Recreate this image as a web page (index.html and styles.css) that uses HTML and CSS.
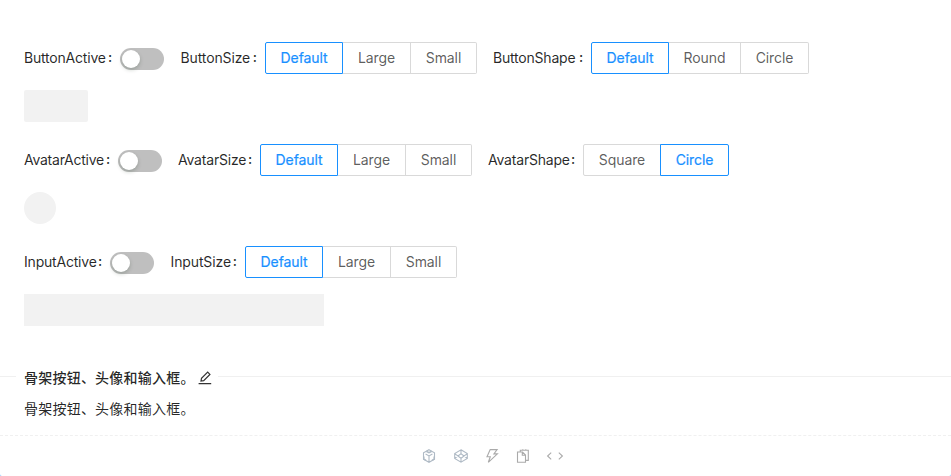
FILE: index.html
```html
<!DOCTYPE html>
<html lang="zh-CN">
<head>
<meta charset="utf-8">
<title>Skeleton</title>
<link rel="stylesheet" href="styles.css">
</head>
<body>
<section class="card">
  <div class="demo">
    <div class="form">
      <div class="item"><label class="label l-button-active">ButtonActive</label><button class="switch" aria-label="ButtonActive"></button></div>
      <div class="item"><label class="label wider l-button-size">ButtonSize</label><div class="group"><span class="radio w-default checked">Default</span><span class="radio w-large">Large</span><span class="radio w-small">Small</span></div></div>
      <div class="item"><label class="label l-button-shape">ButtonShape</label><div class="group"><span class="radio w-default checked">Default</span><span class="radio w-round">Round</span><span class="radio w-circle">Circle</span></div></div>
    </div>
    <div class="skeleton sk-button"></div>
    <div class="form">
      <div class="item"><label class="label tight l-avatar-active">AvatarActive</label><button class="switch" aria-label="AvatarActive"></button></div>
      <div class="item"><label class="label l-avatar-size">AvatarSize</label><div class="group"><span class="radio w-default checked">Default</span><span class="radio w-large">Large</span><span class="radio w-small">Small</span></div></div>
      <div class="item"><label class="label l-avatar-shape">AvatarShape</label><div class="group"><span class="radio w-square">Square</span><span class="radio w-circle checked">Circle</span></div></div>
    </div>
    <div class="skeleton sk-avatar"></div>
    <div class="form">
      <div class="item"><label class="label l-input-active">InputActive</label><button class="switch" aria-label="InputActive"></button></div>
      <div class="item"><label class="label wider l-input-size">InputSize</label><div class="group"><span class="radio w-default checked">Default</span><span class="radio w-large">Large</span><span class="radio w-small">Small</span></div></div>
    </div>
    <div class="skeleton sk-input"></div>
  </div>
  <div class="title">
    <span class="title-text">骨架按钮、头像和输入框。</span>
    <svg class="edit" viewBox="0 0 14 14"><path d="M.6 12.7h12.6M3 10l.5-2.6L9.7 1.2l2.200 2.200-6.200 6.200L3 10z"/></svg>
  </div>
  <p class="desc">骨架按钮、头像和输入框。</p>
  <div class="actions">
    <svg class="tool blue" viewBox="0 0 16 16"><path d="M8 1.700l5.500 3.100v6.400L8 14.300l-5.500-3.100V4.800zM4.600 6L8 7.900 11.400 6M8 7.900v6"/><path class="thick" d="M5.300 3.300L8 4.600l2.700-1.300M2.800 8.400v2.700l2.200 1.300M13.200 8.400v2.700L11 12.400"/></svg>
    <svg class="tool blue" viewBox="0 0 16 16"><path d="M8 1.800l6.300 3.800v4.800L8 14.200l-6.300-3.800V5.600zM8 1.800v4M8 10.200v4M1.700 5.600L8 10.200l6.300-4.600M1.700 10.400L8 5.800l6.300 4.600"/></svg>
    <svg class="tool" viewBox="0 0 16 16"><path d="M6.200 1.600h6.900L9.900 5.900h3.500L4.300 14.300l2-5.500H3z"/></svg>
    <svg class="tool" viewBox="0 0 16 16"><path d="M2.500 4h5l3 3v7.200h-8zM7.300 4v3.200h3.200M5.300 3.600V2.200h8v10.200h-2.200M7.800 1.200v1.500M10.800 1.200v1.500"/></svg>
    <svg class="tool wide" viewBox="0 0 18 16"><path d="M5.200 4.700L1.600 8l3.600 3.300M12.800 4.700L16.400 8l-3.600 3.300"/></svg>
  </div>
</section>
</body>
</html>
```

FILE: styles.css
```css
* { box-sizing: border-box; }
body {
  margin: 0;
  height: 476px;
  overflow: hidden;
  background: #91caff;
  color: rgba(0, 0, 0, .85);
  font: 14px/22px Inter, "Noto Sans CJK SC", sans-serif;
}
.card { height: 476px; background: #fff; border-radius: 0 0 2px 2px; }
.demo { padding: 42px 24px 0; height: 366px; }
.form { display: flex; gap: 16px; height: 32px; }
.item { display: flex; align-items: center; }
.label { display: flex; height: 32px; line-height: 32px; white-space: nowrap; letter-spacing: -.2px; }
.label::after { content: ":"; margin: -1px 0 0 auto; padding-right: 8px; font-weight: 500; }
.tight { letter-spacing: -.25px; }
.wider { padding-left: .5px; letter-spacing: -.12px; }
.l-button-active { width: 96px; }
.l-button-size { width: 85px; }
.l-button-shape { width: 98px; }
.l-avatar-active { width: 94px; }
.l-avatar-size { width: 82px; }
.l-avatar-shape { width: 95px; }
.l-input-active { width: 86px; }
.l-input-size { width: 75px; }
.switch {
  width: 44px;
  height: 22px;
  margin-top: 2px;
  padding: 2px;
  border: 0;
  border-radius: 11px;
  background: #bfbfbf;
}
.switch::before {
  content: "";
  display: block;
  width: 18px;
  height: 18px;
  border-radius: 50%;
  background: #fff;
  box-shadow: 0 2px 4px rgba(0, 35, 11, .2);
}
.group { display: flex; }
.radio {
  height: 32px;
  border: 1px solid #d9d9d9;
  border-left-width: 0;
  color: rgba(0, 0, 0, .65);
  line-height: 30px;
  text-align: center;
  letter-spacing: -.1px;
}
.radio:first-child { border-left-width: 1px; border-radius: 2px 0 0 2px; }
.radio:last-child { border-radius: 0 2px 2px 0; }
.radio.checked { border-color: #1890ff; color: #1890ff; -webkit-text-stroke: .2px #1890ff; }
.radio.checked:last-child { border-left-width: 1px; margin-left: -1px; }
.w-default { width: 78px; }
.w-large { width: 68px; }
.w-small { width: 66px; }
.w-round { width: 72px; }
.w-circle { width: 68px; }
.w-circle.checked { width: 69px; }
.w-square { width: 78px; }
.skeleton { height: 32px; margin: 16px 0 22px; background: #f2f2f2; }
.sk-button { width: 64px; border-radius: 2px; }
.sk-avatar { width: 32px; border-radius: 50%; }
.sk-input { width: 300px; }
.title { display: flex; align-items: center; height: 22px; font-weight: 500; }
.title::before { content: ""; width: 16px; margin: -1px 8px 0 0; border-top: 1px solid #f0f0f0; }
.title::after { content: ""; flex: 1; margin: -1px 0 0 6px; border-top: 1px solid #f0f0f0; }
.title-text { width: 168px; margin-top: 2px; letter-spacing: .22px; white-space: nowrap; }
.edit { width: 14px; height: 14px; margin-left: 6px; margin-top: 2px; fill: none; stroke: #333; stroke-width: 1.2; }
.desc { margin: 10px 24px 0; height: 37px; line-height: 22px; letter-spacing: .22px; }
.actions {
  display: flex;
  justify-content: center;
  align-items: center;
  gap: 15px;
  height: 41px;
  padding-left: 33px;
  border-top: 1px dashed #f0f0f0;
}
.tool { width: 16px; height: 16px; fill: none; stroke: #aaa; stroke-width: 1.1; }
.blue { stroke: #afbac5; }
.blue + .blue { margin-left: 1px; }
.thick { stroke-width: 1.5; }
.wide { width: 18px; }
```
